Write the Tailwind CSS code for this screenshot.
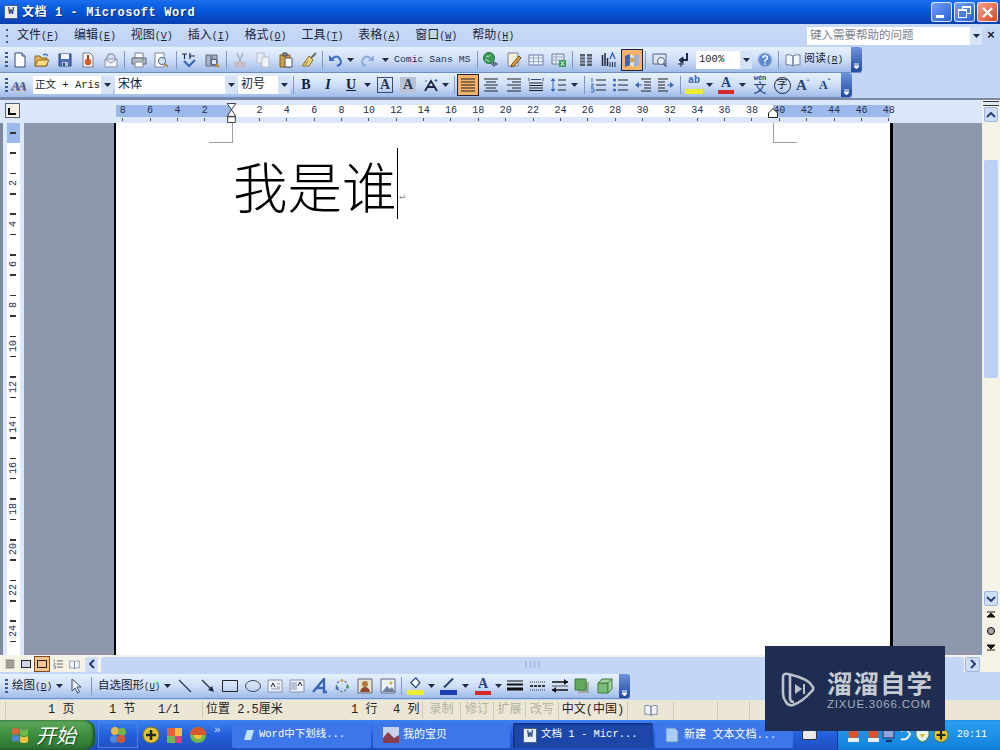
<!DOCTYPE html>
<html lang="zh-CN">
<head>
  <meta charset="UTF-8" />
  <title>文档 1 - Microsoft Word</title>
  <script src="https://cdn.jsdelivr.net/npm/@tailwindcss/browser@4"></script>
</head>
<body class="bg-[#c3d6f5]">
  <!-- iconos compartidos -->
  <svg class="hidden" xmlns="http://www.w3.org/2000/svg">
    <symbol id="new" viewBox="0 0 16 16"><path d="M3 1h7l3 3v11H3z" fill="#fff" stroke="#34466e"/><path d="M10 1v3h3" fill="#d8e4f8" stroke="#34466e"/></symbol>
    <symbol id="open" viewBox="0 0 16 16"><path d="M1 4h5l1 2h6v8H1z" fill="#e8b84e" stroke="#8a6420"/><path d="M1 14l3-6h11l-3 6z" fill="#fbdc84" stroke="#8a6420"/><path d="M9 3q3-2 5 1" fill="none" stroke="#3a70c0" stroke-width="1.3"/></symbol>
    <symbol id="save" viewBox="0 0 16 16"><path d="M2 2h12v12H2z" fill="#4d6fb5" stroke="#27407a"/><path d="M4 2h8v5H4z" fill="#f3f6fc"/><path d="M5 10h6v4H5z" fill="#b8c4dc"/><path d="M6 11h2v3H6z" fill="#34466e"/></symbol>
    <symbol id="perm" viewBox="0 0 16 16"><path d="M3 1h7l3 3v11H3z" fill="#f6f3ee" stroke="#7a7f90"/><circle cx="8" cy="10" r="3.2" fill="#d9552a"/><path d="M7 3h2v5H7z" fill="#b23a1a"/></symbol>
    <symbol id="mail" viewBox="0 0 16 16"><path d="M2 7h12v8H2z" fill="#eef1f6" stroke="#8d94a6"/><path d="M4 7q0-5 4-5t4 5" fill="none" stroke="#9aa0b0" stroke-width="1.5"/><path d="M2 7l6 4 6-4" fill="none" stroke="#8d94a6"/></symbol>
    <symbol id="print" viewBox="0 0 16 16"><path d="M4 1h8v5H4z" fill="#fff" stroke="#7a8296"/><path d="M1 6h14v6H1z" fill="#b7bfcc" stroke="#5e6678"/><path d="M4 10h8v5H4z" fill="#fff" stroke="#7a8296"/><path d="M11 8h2" stroke="#3ca040"/></symbol>
    <symbol id="preview" viewBox="0 0 16 16"><path d="M2 1h9v14H2z" fill="#fff" stroke="#7a8296"/><circle cx="9" cy="9" r="3.6" fill="#cfe2f6" stroke="#5e6678"/><path d="M12 12l3 3" stroke="#b88a30" stroke-width="2"/></symbol>
    <symbol id="spell" viewBox="0 0 16 16"><path d="M1 2h5M3.500 2v5M9 1v6M8 4h6" stroke="#1c2a50" stroke-width="1.2"/><path d="M3 9l5 5 6-6" fill="none" stroke="#3b64b8" stroke-width="2.2"/></symbol>
    <symbol id="research" viewBox="0 0 16 16"><path d="M2 3h5v11H2zM8 3h5v11H8z" fill="#a9b3c8" stroke="#5e6678"/><circle cx="10" cy="10" r="3" fill="#dbe6f5" stroke="#39466a"/><path d="M12 12l3 3" stroke="#b88a30" stroke-width="2"/></symbol>
    <symbol id="cut" viewBox="0 0 16 16"><path d="M5 1l4 9M11 1L7 10" stroke="#a3adc2" stroke-width="1.3"/><circle cx="5" cy="12.500" r="2" fill="none" stroke="#d1aaa5" stroke-width="1.3"/><circle cx="11" cy="12.500" r="2" fill="none" stroke="#d1aaa5" stroke-width="1.3"/></symbol>
    <symbol id="copy" viewBox="0 0 16 16"><path d="M2 1h7v10H2z" fill="#e8edf6" stroke="#b4bccd"/><path d="M7 5h7v10H7z" fill="#f2f5fb" stroke="#b4bccd"/></symbol>
    <symbol id="paste" viewBox="0 0 16 16"><path d="M2 3h10v12H2z" fill="#cf9f4a" stroke="#7b5a1e"/><path d="M5 1h4v3H5z" fill="#8c94a6" stroke="#444"/><path d="M7 6h7v9H7z" fill="#fff" stroke="#4b5470"/></symbol>
    <symbol id="brush" viewBox="0 0 16 16"><path d="M10 6l5-5" stroke="#6d6a5d" stroke-width="2"/><path d="M8 4l4 4-4 6-7 0z" fill="#ecd079" stroke="#8a7130"/><path d="M4 13l3-4" stroke="#8a7130"/></symbol>
    <symbol id="undo" viewBox="0 0 16 16"><path d="M4 7q5-5 8 0t-3 7" fill="none" stroke="#3f6dc2" stroke-width="2.2"/><path d="M1 3v6h6z" fill="#3f6dc2"/></symbol>
    <symbol id="redo" viewBox="0 0 16 16"><path d="M12 7q-5-5-8 0t3 7" fill="none" stroke="#8ea9dc" stroke-width="2.2"/><path d="M15 3v6H9z" fill="#8ea9dc"/></symbol>
    <symbol id="link" viewBox="0 0 16 16"><circle cx="7" cy="6" r="5.500" fill="#3f9d5b" stroke="#2a6d41"/><path d="M4 4q3 2 4-1M3 8q3-1 4 2" fill="none" stroke="#b8e6c0"/><path d="M9 12h3M11 10l4 2-4 2" fill="none" stroke="#55607a" stroke-width="1.4"/></symbol>
    <symbol id="tb" viewBox="0 0 16 16"><path d="M2 1h10v13H2z" fill="#f6f1d8" stroke="#7a8296"/><path d="M6 12l7-8 2 2-7 8-3 1z" fill="#e0a040" stroke="#6c4a1a"/></symbol>
    <symbol id="table" viewBox="0 0 16 16"><path d="M1 3h14v10H1z" fill="#eef3fb" stroke="#6f7d9c"/><path d="M1 6h14M1 9.500h14M5.500 3v10M10.500 3v10" stroke="#9aa8c6"/></symbol>
    <symbol id="excel" viewBox="0 0 16 16"><path d="M1 2h12v10H1z" fill="#e6edf6" stroke="#6f7d9c"/><path d="M1 5h12M1 8h12M5 2v10" stroke="#9aa8c6"/><path d="M8 8h7v7H8z" fill="#3f9d5b"/><path d="M10 9.500l3 4M13 9.500l-3 4" stroke="#fff"/></symbol>
    <symbol id="cols" viewBox="0 0 16 16"><path d="M2 2h5v12H2zM9 2h5v12H9z" fill="#545c6e"/><path d="M2 5h5M2 8h5M2 11h5M9 5h5M9 8h5M9 11h5" stroke="#cdd5e4"/></symbol>
    <symbol id="draw" viewBox="0 0 16 16"><path d="M1.500 3v11M4 1v13M6.500 6v8" stroke="#20283e" stroke-width="1.5"/><path d="M9 7l2.500-6 2.500 6" fill="none" stroke="#3b64b8" stroke-width="1.4"/><path d="M9 10v5M11.500 10v5M14 10v5" stroke="#20283e"/></symbol>
    <symbol id="map" viewBox="0 0 16 16"><path d="M1 4l5-2v11l-5 2z" fill="#3b64b8"/><path d="M6 2l4 2v11l-4-2z" fill="#e6e3d6"/><path d="M10 4l5-2v11l-5 2z" fill="#9ab0d8"/><circle cx="8" cy="8" r="2.500" fill="#e0a040"/></symbol>
    <symbol id="thumb" viewBox="0 0 16 16"><path d="M1 2h13v10H1z" fill="#dbe6f5" stroke="#566282"/><circle cx="9" cy="9" r="3.500" fill="#f3f6fc" stroke="#566282"/><path d="M11.500 11.500l3 3" stroke="#566282" stroke-width="2"/></symbol>
    <symbol id="pil" viewBox="0 0 16 16"><path d="M12 1v7H6" fill="none" stroke="#1c2a50" stroke-width="2"/><path d="M8 5L4 8l4 3zM6 9v6M3 12h6" fill="#1c2a50" stroke="#1c2a50"/></symbol>
    <symbol id="help" viewBox="0 0 16 16"><circle cx="8" cy="8" r="7" fill="#5e88cf" stroke="#a8bde4" stroke-width="1.4"/><path d="M5.800 6q.4-2.200 2.400-2.200t2.200 2q0 1.200-1.400 1.900T8 10M8 11.200v1.600" fill="none" stroke="#fff" stroke-width="1.500"/></symbol>
    <symbol id="book" viewBox="0 0 16 16"><path d="M1 3q4-1 7 1v10q-3-2-7-1zM15 3q-4-1-7 1v10q3-2 7-1z" fill="#f2f5fb" stroke="#6f7d9c"/></symbol>
    <symbol id="left" viewBox="0 0 16 16"><path d="M1 2h14M1 5h14M1 8h14M1 11h14M1 14h14" stroke="#222" stroke-width="1.200"/></symbol>
    <symbol id="center" viewBox="0 0 16 16"><path d="M1 2h14M3 5h10M1 8h14M3 11h10M1 14h14" stroke="#222"/></symbol>
    <symbol id="right" viewBox="0 0 16 16"><path d="M1 2h14M6 5h9M1 8h14M6 11h9M1 14h14" stroke="#222"/></symbol>
    <symbol id="just" viewBox="0 0 16 16"><path d="M1 1v3M15 1v3M3 2.500h10" stroke="#3b4a70"/><path d="M1 6h14M1 8.500h14M1 11h14M1 13.500h14" stroke="#222"/></symbol>
    <symbol id="spacing" viewBox="0 0 16 16"><path d="M3 1l2.500 3h-5zM3 15L.5 12h5z" fill="#3b64b8"/><path d="M3 3v10" stroke="#3b64b8"/><path d="M8 3h8M8 8h8M8 13h8" stroke="#222"/></symbol>
    <symbol id="num" viewBox="0 0 16 16"><path d="M2 1v4M1 7h2.500L1 10h3M1 12h3v3H1" fill="none" stroke="#3b64b8"/><path d="M6 3h10M6 8h10M6 13h10" stroke="#222"/></symbol>
    <symbol id="bul" viewBox="0 0 16 16"><circle cx="2.500" cy="3" r="1.500" fill="#3b64b8"/><circle cx="2.500" cy="8" r="1.500" fill="#3b64b8"/><circle cx="2.500" cy="13" r="1.500" fill="#3b64b8"/><path d="M6 3h10M6 8h10M6 13h10" stroke="#222"/></symbol>
    <symbol id="out" viewBox="0 0 16 16"><path d="M6 2h10M9 5h7M9 8h7M9 11h7M6 14h10" stroke="#222"/><path d="M0 8l4-3v6z" fill="#3b64b8"/><path d="M4 8h3" stroke="#3b64b8"/></symbol>
    <symbol id="ind" viewBox="0 0 16 16"><path d="M0 2h10M0 5h7M0 8h7M0 11h7M0 14h10" stroke="#222"/><path d="M16 8l-4-3v6z" fill="#3b64b8"/><path d="M12 8H9" stroke="#3b64b8"/></symbol>
    <symbol id="line" viewBox="0 0 16 16"><path d="M2 2l12 12" stroke="#2c3650" stroke-width="1.200"/></symbol>
    <symbol id="arrow" viewBox="0 0 16 16"><path d="M2 2l10 10" stroke="#2c3650" stroke-width="1.400"/><path d="M14 14l-6-2 4-4z" fill="#1c2a50"/></symbol>
    <symbol id="rect" viewBox="0 0 16 16"><path d="M.5 2.500h15v11H.5z" fill="none" stroke="#222"/></symbol>
    <symbol id="oval" viewBox="0 0 16 16"><ellipse cx="8" cy="8" rx="7.500" ry="5.500" fill="none" stroke="#3a4a6a"/></symbol>
    <symbol id="txt" viewBox="0 0 16 16"><path d="M1 2h14v12H1z" fill="#eef3fb" stroke="#8692ac"/><path d="M4 9l2-4 2 4" fill="none" stroke="#222"/><path d="M10 6h3M10 9h3M4 11h9" stroke="#8692ac"/></symbol>
    <symbol id="vtxt" viewBox="0 0 16 16"><path d="M1 2h14v12H1z" fill="#eef3fb" stroke="#8692ac"/><path d="M3 4v8M5 4v8M7 4v8" stroke="#8692ac"/><path d="M9 8l2-4 2 4" fill="none" stroke="#222"/></symbol>
    <symbol id="wa" viewBox="0 0 16 16"><path d="M1 14L12 1v13h3M5 10h7" fill="none" stroke="#3b64b8" stroke-width="2.400"/></symbol>
    <symbol id="dg" viewBox="0 0 16 16"><circle cx="8" cy="8" r="5.500" fill="none" stroke="#6b738a" stroke-dasharray="2 2" stroke-width="1.500"/><circle cx="8" cy="2.500" r="1.500" fill="#e0a040"/><circle cx="13.500" cy="9" r="1.500" fill="#3f9d5b"/><circle cx="3" cy="10" r="1.500" fill="#3b64b8"/></symbol>
    <symbol id="clip" viewBox="0 0 16 16"><path d="M1 1h14v14H1z" fill="#e9e4d2" stroke="#5e6678"/><circle cx="8" cy="6" r="3" fill="#b57a3a"/><path d="M3 14q1-5 5-5t5 5z" fill="#8e4a30"/></symbol>
    <symbol id="pic" viewBox="0 0 16 16"><path d="M1 1h14v14H1z" fill="#eef3fb" stroke="#5e6678"/><path d="M2 14l5-6 3 3 2-2 3 5z" fill="#6e7fa0"/><circle cx="11" cy="5" r="1.500" fill="#e0a040"/></symbol>
    <symbol id="ls" viewBox="0 0 16 16"><path d="M0 3h16" stroke="#111"/><path d="M0 6.500h16" stroke="#111" stroke-width="2"/><path d="M0 11h16" stroke="#111" stroke-width="3"/></symbol>
    <symbol id="dash" viewBox="0 0 16 16"><path d="M0 4h16M0 12h16" stroke="#333" stroke-dasharray="1 1"/><path d="M0 8h16" stroke="#333" stroke-dasharray="3 1" stroke-width="2"/></symbol>
    <symbol id="arrs" viewBox="0 0 16 16"><path d="M0 4h16M0 12h16" stroke="#111" stroke-width="1.300"/><path d="M12 1l4 3-4 3zM4 9l-4 3 4 3z" fill="#111"/><path d="M0 8h16" stroke="#555"/></symbol>
    <symbol id="sh" viewBox="0 0 16 16"><path d="M4 4h11v11H4z" fill="#9aa8a0"/><path d="M1 1h11v11H1z" fill="#62a85e" stroke="#3f7a3e"/></symbol>
    <symbol id="d3" viewBox="0 0 16 16"><path d="M1 5h10v10H1z" fill="#7cbb78" stroke="#3f7a3e"/><path d="M1 5l4-4h10l-4 4zM11 5l4-4v10l-4 4z" fill="#a5d39d" stroke="#3f7a3e"/></symbol>
    <symbol id="cursor" viewBox="0 0 16 16"><path d="M4 1v12l3-3 2.500 5 2-1-2.500-5h4z" fill="#eef3fb" stroke="#3b4a70"/></symbol>
    <symbol id="down" viewBox="0 0 7 4"><path d="M0 0h7L3.500 4z" fill="#1c2a50"/></symbol>
    <symbol id="end" viewBox="0 0 11 24"><path d="M3 17h5M3 19h5l-2.500 3z" fill="#fff" stroke="#fff"/></symbol>
  </svg>

  <div class="relative flex h-[750px] w-[1000px] flex-col overflow-hidden text-[12px] text-[#141c30] [font-family:'Liberation_Mono','Noto_Sans_CJK_SC',monospace]">

    <!-- barra de titulo -->
    <div class="flex h-[24px] shrink-0 items-center bg-gradient-to-b from-[#1b6ff0] via-[#0254d8] to-[#0a3fb0] pl-[4px] pr-[2px] text-white">
      <div class="mr-[4px] flex h-[14px] w-[14px] items-center justify-center border border-[#54607c] bg-[#e8eef8] text-[10px] font-bold leading-none text-[#27407a]">W</div>
      <span class="pt-[1px] text-[12px] font-bold tracking-[0.6px] [text-shadow:1px_1px_0_#0a2c80]">文档 1 - Microsoft Word</span>
      <div class="ml-auto flex gap-[2px]">
        <div class="flex h-[20px] w-[21px] items-end justify-start rounded-[3px] border border-white/80 bg-gradient-to-br from-[#74a0f2] to-[#2a5fd8] pb-[3px] pl-[4px]"><div class="h-[3px] w-[8px] bg-white"></div></div>
        <div class="relative h-[20px] w-[21px] rounded-[3px] border border-white/80 bg-gradient-to-br from-[#74a0f2] to-[#2a5fd8]">
          <div class="absolute left-[7px] top-[3px] h-[8px] w-[9px] border border-t-2 border-white"></div>
          <div class="absolute left-[3px] top-[6px] h-[9px] w-[9px] border border-t-2 border-white bg-[#4a7ce4]"></div>
        </div>
        <div class="flex h-[20px] w-[21px] items-center justify-center rounded-[3px] border border-white/80 bg-gradient-to-br from-[#f0a088] to-[#d8431c]">
          <svg class="h-[13px] w-[13px]" viewBox="0 0 13 13"><path d="M2 2l9 9M11 2l-9 9" stroke="#fff" stroke-width="2.400"/></svg>
        </div>
      </div>
    </div>

    <!-- menu -->
    <div class="flex h-[23px] shrink-0 items-center bg-gradient-to-b from-[#c9daf6] to-[#bfd3f4]">
      <div class="ml-[6px] mr-[9px] flex h-[14px] w-[2px] shrink-0 flex-col justify-between"><i class="h-[2px] bg-[#3e5a92]"></i><i class="h-[2px] bg-[#3e5a92]"></i><i class="h-[2px] bg-[#3e5a92]"></i></div>
      <div class="flex text-[12px] leading-none text-[#1c2440]">
        <span class="w-[56.900px] whitespace-nowrap">文件<span class="text-[10px]">(<u>F</u>)</span></span>
        <span class="w-[56.900px] whitespace-nowrap">编辑<span class="text-[10px]">(<u>E</u>)</span></span>
        <span class="w-[56.900px] whitespace-nowrap">视图<span class="text-[10px]">(<u>V</u>)</span></span>
        <span class="w-[56.900px] whitespace-nowrap">插入<span class="text-[10px]">(<u>I</u>)</span></span>
        <span class="w-[56.900px] whitespace-nowrap">格式<span class="text-[10px]">(<u>O</u>)</span></span>
        <span class="w-[56.900px] whitespace-nowrap">工具<span class="text-[10px]">(<u>T</u>)</span></span>
        <span class="w-[56.900px] whitespace-nowrap">表格<span class="text-[10px]">(<u>A</u>)</span></span>
        <span class="w-[56.900px] whitespace-nowrap">窗口<span class="text-[10px]">(<u>W</u>)</span></span>
        <span class="w-[56.900px] whitespace-nowrap">帮助<span class="text-[10px]">(<u>H</u>)</span></span>
      </div>
      <div class="ml-auto mr-[2px] flex items-center">
        <div class="flex h-[18px] w-[175px] items-center bg-white pl-[3px] text-[11.500px] text-[#7b8190]">
          <span>键入需要帮助的问题</span>
          <div class="ml-auto flex h-full w-[12px] items-center justify-center bg-[#d6e2f6]"><svg class="h-[4px] w-[7px]"><use href="#down"/></svg></div>
        </div>
        <span class="ml-[2px] w-[14px] text-center text-[13px] font-bold leading-none">×</span>
      </div>
    </div>

    <!-- barra estandar -->
    <div class="flex h-[26px] shrink-0">
      <div class="flex h-[25px] w-[862px] items-center rounded-r-[3px] bg-gradient-to-b from-[#e6f0fe] via-[#cfdff8] to-[#9fbbe8] pl-[5px] shadow-[0_1px_0_#6f8cc4]">
        <div class="flex h-[15px] w-[3px] shrink-0 flex-col justify-between"><i class="h-[2px] bg-[#3e5a92]"></i><i class="h-[2px] bg-[#3e5a92]"></i><i class="h-[2px] bg-[#3e5a92]"></i><i class="h-[2px] bg-[#3e5a92]"></i></div>
        <svg class="ml-[4px] h-[16px] w-[16px] shrink-0"><use href="#new"/></svg>
        <svg class="ml-[6px] h-[16px] w-[16px] shrink-0"><use href="#open"/></svg>
        <svg class="ml-[7px] h-[16px] w-[16px] shrink-0"><use href="#save"/></svg>
        <svg class="ml-[7px] h-[16px] w-[16px] shrink-0"><use href="#perm"/></svg>
        <svg class="ml-[7px] h-[16px] w-[16px] shrink-0"><use href="#mail"/></svg>
        <div class="ml-[5px] h-[18px] w-[1px] shrink-0 bg-[#7f98c8]"></div>
        <svg class="ml-[6px] h-[16px] w-[16px] shrink-0"><use href="#print"/></svg>
        <svg class="ml-[6px] h-[16px] w-[16px] shrink-0"><use href="#preview"/></svg>
        <div class="ml-[7px] h-[18px] w-[1px] shrink-0 bg-[#7f98c8]"></div>
        <svg class="ml-[4px] h-[16px] w-[16px] shrink-0"><use href="#spell"/></svg>
        <svg class="ml-[7px] h-[16px] w-[16px] shrink-0"><use href="#research"/></svg>
        <div class="ml-[6px] h-[18px] w-[1px] shrink-0 bg-[#7f98c8]"></div>
        <svg class="ml-[5px] h-[16px] w-[16px] shrink-0"><use href="#cut"/></svg>
        <svg class="ml-[7px] h-[16px] w-[16px] shrink-0"><use href="#copy"/></svg>
        <svg class="ml-[7px] h-[16px] w-[16px] shrink-0"><use href="#paste"/></svg>
        <svg class="ml-[7px] h-[16px] w-[16px] shrink-0"><use href="#brush"/></svg>
        <div class="ml-[5px] h-[18px] w-[1px] shrink-0 bg-[#7f98c8]"></div>
        <svg class="ml-[5px] h-[16px] w-[16px] shrink-0"><use href="#undo"/></svg>
        <svg class="ml-[2.500px] h-[4px] w-[7px] shrink-0"><use href="#down"/></svg>
        <svg class="ml-[5.500px] h-[16px] w-[16px] shrink-0"><use href="#redo"/></svg>
        <svg class="ml-[6.500px] h-[4px] w-[7px] shrink-0"><use href="#down"/></svg>
        <span class="ml-[5.500px] w-[76px] shrink-0 whitespace-nowrap text-[9.800px] leading-none text-[#25304c]">Comic Sans MS</span>
        <div class="ml-[7px] h-[18px] w-[1px] shrink-0 bg-[#7f98c8]"></div>
        <svg class="ml-[4px] h-[16px] w-[16px] shrink-0"><use href="#link"/></svg>
        <svg class="ml-[8px] h-[16px] w-[16px] shrink-0"><use href="#tb"/></svg>
        <svg class="ml-[6px] h-[16px] w-[16px] shrink-0"><use href="#table"/></svg>
        <svg class="ml-[7px] h-[16px] w-[16px] shrink-0"><use href="#excel"/></svg>
        <div class="ml-[5px] h-[18px] w-[1px] shrink-0 bg-[#7f98c8]"></div>
        <svg class="ml-[5px] h-[16px] w-[16px] shrink-0"><use href="#cols"/></svg>
        <svg class="ml-[7px] h-[16px] w-[16px] shrink-0"><use href="#draw"/></svg>
        <div class="ml-[4px] flex h-[22px] w-[22px] shrink-0 items-center justify-center border border-[#1c2440] bg-[#f5b26b]"><svg class="h-[16px] w-[16px]"><use href="#map"/></svg></div>
        <div class="ml-[2px] h-[18px] w-[1px] shrink-0 bg-[#7f98c8]"></div>
        <svg class="ml-[6px] h-[16px] w-[16px] shrink-0"><use href="#thumb"/></svg>
        <svg class="ml-[7px] h-[16px] w-[16px] shrink-0"><use href="#pil"/></svg>
        <div class="ml-[5px] flex h-[18px] w-[56px] shrink-0 items-center bg-white pl-[3px] text-[10.500px] leading-none">100%<div class="ml-auto flex h-full w-[12px] items-center justify-center bg-[#d6e2f6]"><svg class="h-[4px] w-[7px]"><use href="#down"/></svg></div></div>
        <svg class="ml-[5px] h-[16px] w-[16px] shrink-0"><use href="#help"/></svg>
        <div class="ml-[5px] h-[18px] w-[1px] shrink-0 bg-[#7f98c8]"></div>
        <svg class="ml-[6px] h-[16px] w-[16px] shrink-0"><use href="#book"/></svg>
        <span class="ml-[3px] whitespace-nowrap text-[11px] leading-none">阅读<span class="text-[9.500px]">(<u>R</u>)</span></span>
        <div class="ml-auto h-full w-[11px] shrink-0 rounded-r-[3px] bg-gradient-to-b from-[#6d93dc] to-[#234a9e]"><svg class="h-[24px] w-[11px]"><use href="#end"/></svg></div>
      </div>
    </div>

    <!-- barra formato -->
    <div class="flex h-[25px] shrink-0">
      <div class="flex h-[24px] w-[852px] items-center rounded-r-[3px] bg-gradient-to-b from-[#e6f0fe] via-[#cfdff8] to-[#9fbbe8] pl-[5px] shadow-[0_1px_0_#6f8cc4]">
        <div class="flex h-[15px] w-[3px] shrink-0 flex-col justify-between"><i class="h-[2px] bg-[#3e5a92]"></i><i class="h-[2px] bg-[#3e5a92]"></i><i class="h-[2px] bg-[#3e5a92]"></i><i class="h-[2px] bg-[#3e5a92]"></i></div>
        <span class="ml-[3px] flex w-[20px] shrink-0 text-[13px] font-bold italic leading-none text-[#3b64b8] [font-family:'Liberation_Serif',serif] [text-shadow:1px_1px_0_#d0733a]"><span>A</span><span class="-ml-[2px]">A</span></span>
        <div class="ml-[2px] flex h-[18px] w-[80px] shrink-0 items-center bg-white pl-[2px] text-[10.500px] leading-none"><span class="w-[66px] whitespace-nowrap">正文 + Aris</span><div class="ml-auto flex h-full w-[12px] items-center justify-center bg-[#d6e2f6]"><svg class="h-[4px] w-[7px]"><use href="#down"/></svg></div></div>
        <div class="ml-[2px] flex h-[18px] w-[122px] shrink-0 items-center bg-white pl-[3px] text-[12px] leading-none">宋体<div class="ml-auto flex h-full w-[12px] items-center justify-center bg-[#d6e2f6]"><svg class="h-[4px] w-[7px]"><use href="#down"/></svg></div></div>
        <div class="ml-[1px] flex h-[18px] w-[52px] shrink-0 items-center bg-white pl-[3px] text-[12px] leading-none">初号<div class="ml-auto flex h-full w-[12px] items-center justify-center bg-[#d6e2f6]"><svg class="h-[4px] w-[7px]"><use href="#down"/></svg></div></div>
        <div class="ml-[3px] h-[18px] w-[1px] shrink-0 bg-[#7f98c8]"></div>
        <span class="ml-[4px] w-[16px] shrink-0 text-center text-[14px] font-bold leading-none [font-family:'Liberation_Serif',serif]">B</span>
        <span class="ml-[6px] w-[16px] shrink-0 text-center text-[14px] font-bold italic leading-none [font-family:'Liberation_Serif',serif]">I</span>
        <span class="ml-[7px] w-[16px] shrink-0 text-center text-[14px] font-bold leading-none underline [font-family:'Liberation_Serif',serif]">U</span>
        <svg class="ml-[4.500px] h-[4px] w-[7px] shrink-0"><use href="#down"/></svg>
        <span class="ml-[6.500px] flex h-[16px] w-[16px] shrink-0 items-center justify-center border border-[#3b4a70] text-[14px] font-bold leading-none text-[#2c3a60] [font-family:'Liberation_Serif',serif]">A</span>
        <span class="ml-[7px] flex h-[16px] w-[16px] shrink-0 items-center justify-center bg-[#b9c3d4] text-[14px] font-bold leading-none text-[#2c3a60] [font-family:'Liberation_Serif',serif]">A</span>
        <svg class="ml-[7px] h-[16px] w-[16px] shrink-0" viewBox="0 0 16 16"><path d="M2 14L8 4l6 10M4 10h8" fill="none" stroke="#1c2440" stroke-width="1.800"/><path d="M2 4h2M13 2v3M11.500 3.500h3" stroke="#3b64b8" stroke-width="1.200"/></svg>
        <svg class="ml-[2.500px] h-[4px] w-[7px] shrink-0"><use href="#down"/></svg>
        <div class="ml-[5.500px] h-[18px] w-[1px] shrink-0 bg-[#7f98c8]"></div>
        <div class="ml-[2px] flex h-[22px] w-[22px] shrink-0 items-center justify-center border border-[#1c2440] bg-[#f5b26b]"><svg class="h-[16px] w-[16px]"><use href="#left"/></svg></div>
        <svg class="ml-[4px] h-[16px] w-[16px] shrink-0"><use href="#center"/></svg>
        <svg class="ml-[7px] h-[16px] w-[16px] shrink-0"><use href="#right"/></svg>
        <svg class="ml-[6px] h-[16px] w-[16px] shrink-0"><use href="#just"/></svg>
        <svg class="ml-[6px] h-[16px] w-[16px] shrink-0"><use href="#spacing"/></svg>
        <svg class="ml-[4.500px] h-[4px] w-[7px] shrink-0"><use href="#down"/></svg>
        <div class="ml-[6.500px] h-[18px] w-[1px] shrink-0 bg-[#7f98c8]"></div>
        <svg class="ml-[5px] h-[16px] w-[16px] shrink-0"><use href="#num"/></svg>
        <svg class="ml-[6px] h-[16px] w-[16px] shrink-0"><use href="#bul"/></svg>
        <svg class="ml-[7px] h-[16px] w-[16px] shrink-0"><use href="#out"/></svg>
        <svg class="ml-[7px] h-[16px] w-[16px] shrink-0"><use href="#ind"/></svg>
        <div class="ml-[6px] h-[18px] w-[1px] shrink-0 bg-[#7f98c8]"></div>
        <div class="ml-[4px] flex h-[18px] w-[18px] shrink-0 flex-col items-center leading-none"><span class="text-[10px] font-bold text-[#3b64b8]">ab</span><div class="mt-auto h-[5px] w-[18px] bg-[#ecec30]"></div></div>
        <svg class="ml-[2.500px] h-[4px] w-[7px] shrink-0"><use href="#down"/></svg>
        <div class="ml-[4.500px] flex h-[18px] w-[18px] shrink-0 flex-col items-center leading-none"><span class="text-[14px] font-bold text-[#27407a] [font-family:'Liberation_Serif',serif]">A</span><div class="mt-auto h-[4px] w-[16px] bg-[#d42a2a]"></div></div>
        <svg class="ml-[3.500px] h-[4px] w-[7px] shrink-0"><use href="#down"/></svg>
        <div class="ml-[3.500px] flex w-[22px] shrink-0 flex-col items-center leading-none text-[#27407a]"><span class="text-[7px] font-bold">wén</span><span class="text-[13px]">文</span></div>
        <div class="ml-[2.500px] flex h-[17px] w-[17px] shrink-0 items-center justify-center rounded-full border border-[#1c2440] text-[11px] leading-none">字</div>
        <span class="ml-[5.500px] w-[16px] shrink-0 whitespace-nowrap text-[15px] font-bold leading-none text-[#27407a] [font-family:'Liberation_Serif',serif]">A<sup class="text-[8px]">ˆ</sup></span>
        <span class="ml-[7px] w-[16px] shrink-0 whitespace-nowrap text-[12px] font-bold leading-none text-[#27407a] [font-family:'Liberation_Serif',serif]">A<sup class="text-[8px]">ˇ</sup></span>
        <div class="ml-auto h-full w-[11px] shrink-0 rounded-r-[3px] bg-gradient-to-b from-[#6d93dc] to-[#234a9e]"><svg class="h-[24px] w-[11px]"><use href="#end"/></svg></div>
      </div>
    </div>

    <!-- regla horizontal -->
    <div class="flex h-[25px] shrink-0 border-t-2 border-[#7d8a9e] bg-[#dbe7fb]">
      <div class="ml-[5px] mt-[3px] flex h-[15px] w-[15px] items-end border border-[#55607a] bg-[#f3f1e6] p-[2px]"><svg class="h-[7px] w-[8px]" viewBox="0 0 8 7"><path d="M1 0v6h7" fill="none" stroke="#111" stroke-width="2"/></svg></div>
      <div class="relative ml-[96px] w-[774px]">
        <div class="mt-[5px] flex h-[12px]">
          <div class="h-full w-[116px] bg-[#9db8ea]"></div>
          <div class="h-full w-[541px] bg-white"></div>
          <div class="h-full w-[117px] bg-[#9db8ea]"></div>
        </div>
        <div id="rule-h" class="absolute left-[-7px] top-[5px] flex h-[18px]"></div>
        <!-- sangrias -->
        <svg class="absolute left-[110px] top-[3px] h-[20px] w-[11px]" viewBox="0 0 11 21"><path d="M1 .5h9L5.500 7zM5.500 7L10 14H1z" fill="#fff" stroke="#333"/><path d="M1.500 14.500h8v6h-8z" fill="#fff" stroke="#333"/></svg>
        <svg class="absolute left-[652px] top-[8px] h-[10px] w-[10px]" viewBox="0 0 10 10"><path d="M5 .5L9.500 5v4.500h-9V5z" fill="#fff" stroke="#222"/></svg>
      </div>
    </div>

    <!-- documento -->
    <div class="flex min-h-0 flex-1">
      <div class="w-[24px] shrink-0 border-l-[3px] border-[#7d8a9e] bg-[#dbe7fb] pl-[4px]">
        <div id="rule-v" class="relative h-full w-[13px] bg-white">
          <div class="h-[20px] bg-[#9db8ea]"></div>
        </div>
      </div>
      <div class="w-[90px] shrink-0 bg-[#8d97ad]"></div>
      <div class="relative w-[779px] shrink-0 border-x-2 border-r-[3px] border-black bg-white">
        <div class="absolute left-[93px] top-0 h-[20px] w-[24px] border-b border-r border-[#a0a0a0]"></div>
        <div class="absolute left-[657px] top-0 h-[20px] w-[24px] border-b border-l border-[#a0a0a0]"></div>
        <div class="ml-[117px] mt-[33px] flex items-start">
          <span class="whitespace-nowrap text-[54.500px] font-light leading-[58px] text-black [font-family:'Noto_Sans_CJK_SC',sans-serif]">我是谁</span>
          <div class="-mt-[8px] h-[71px] w-[1.500px] shrink-0 bg-black"></div>
          <span class="ml-[1px] mt-[36px] text-[10px] leading-none text-[#8a8a8a]">↵</span>
        </div>
      </div>
      <div class="w-[89px] shrink-0 bg-[#8d97ad]"></div>
      <!-- scroll vertical -->
      <div class="-mt-[23px] flex w-[18px] shrink-0 flex-col items-center bg-[#f5f2e6]">
        <div class="mt-[1px] h-[5px] w-[16px] shrink-0 border-y border-[#333] bg-[#dfe6f4]"></div>
        <div class="mt-[1px] flex h-[15px] w-[14px] shrink-0 items-center justify-center rounded-[2px] border border-[#9db4e0] bg-[#cfdef8]"><svg class="h-[6px] w-[10px]" viewBox="0 0 10 6"><path d="M1 5l4-4 4 4" fill="none" stroke="#27407a" stroke-width="2"/></svg></div>
        <div class="mt-[38px] h-[218px] w-[14px] shrink-0 rounded-[2px] bg-[#bcd0f5]"></div>
        <div class="mt-[213px] flex h-[15px] w-[14px] shrink-0 items-center justify-center rounded-[2px] border border-[#9db4e0] bg-[#cfdef8]"><svg class="h-[6px] w-[10px]" viewBox="0 0 10 6"><path d="M1 1l4 4 4-4" fill="none" stroke="#27407a" stroke-width="2"/></svg></div>
        <svg class="mt-[5px] h-[8px] w-[8px] shrink-0" viewBox="0 0 8 8"><path d="M0 1h8M4 2L0 6h8z" stroke="#111" fill="#111"/></svg>
        <div class="mt-[8px] h-[8px] w-[8px] shrink-0 rounded-full border border-black bg-[#a8a8a8]"></div>
        <svg class="mt-[8px] h-[8px] w-[8px] shrink-0" viewBox="0 0 8 8"><path d="M0 7h8M4 6L0 2h8z" stroke="#111" fill="#111"/></svg>
      </div>
    </div>

    <!-- scroll horizontal -->
    <div class="flex h-[17px] shrink-0 items-center border-t border-[#f5f2e6] bg-[#f5f2e6] pr-[20px]">
      <svg class="ml-[5px] h-[10px] w-[10px] shrink-0"><use href="#left"/></svg>
      <div class="ml-[6px] h-[8px] w-[10px] shrink-0 border border-[#222] bg-[#cfd8e8]"></div>
      <div class="ml-[3px] flex h-[16px] w-[16px] shrink-0 items-center justify-center border border-[#7a4a20] bg-[#f5c48c]"><div class="h-[8px] w-[10px] border border-[#222]"></div></div>
      <svg class="ml-[3px] h-[10px] w-[10px] shrink-0"><use href="#num"/></svg>
      <svg class="ml-[6px] h-[11px] w-[11px] shrink-0"><use href="#book"/></svg>
      <div class="ml-[5px] flex h-[15px] w-[13px] shrink-0 items-center justify-center rounded-[2px] bg-[#cfdef8]"><svg class="h-[10px] w-[6px]" viewBox="0 0 6 10"><path d="M5 1L1 5l4 4" fill="none" stroke="#27407a" stroke-width="2"/></svg></div>
      <div class="ml-[3px] flex h-[15px] flex-1 items-center justify-center rounded-[2px] bg-[#c3d6f8]"><span class="text-[7px] leading-none text-[#7e90b8]">||||</span></div>
      <div class="ml-[1px] flex h-[15px] w-[15px] shrink-0 items-center justify-center rounded-[2px] border border-[#9db4e0] bg-[#cfdef8]"><svg class="h-[10px] w-[6px]" viewBox="0 0 6 10"><path d="M1 1l4 4-4 4" fill="none" stroke="#27407a" stroke-width="2"/></svg></div>
    </div>

    <!-- barra dibujo -->
    <div class="flex h-[28px] shrink-0 items-center bg-[#c3d6f5]">
      <div class="flex h-[24px] w-[630px] items-center rounded-r-[3px] bg-gradient-to-b from-[#e6f0fe] via-[#cfdff8] to-[#9fbbe8] pl-[5px] shadow-[0_1px_0_#6f8cc4]">
        <div class="flex h-[15px] w-[3px] shrink-0 flex-col justify-between"><i class="h-[2px] bg-[#3e5a92]"></i><i class="h-[2px] bg-[#3e5a92]"></i><i class="h-[2px] bg-[#3e5a92]"></i><i class="h-[2px] bg-[#3e5a92]"></i></div>
        <span class="ml-[4px] w-[41px] shrink-0 whitespace-nowrap text-[11.500px] leading-none">绘图<span class="text-[9.500px]">(<u>D</u>)</span></span>
        <svg class="ml-[2.500px] h-[4px] w-[7px] shrink-0"><use href="#down"/></svg>
        <svg class="ml-[5.500px] h-[16px] w-[16px] shrink-0"><use href="#cursor"/></svg>
        <div class="ml-[7px] h-[18px] w-[1px] shrink-0 bg-[#7f98c8]"></div>
        <span class="ml-[6px] w-[62px] shrink-0 whitespace-nowrap text-[11.500px] leading-none">自选图形<span class="text-[9px]">(<u>U</u>)</span></span>
        <svg class="ml-[3.500px] h-[4px] w-[7px] shrink-0"><use href="#down"/></svg>
        <svg class="ml-[6.500px] h-[16px] w-[16px] shrink-0"><use href="#line"/></svg>
        <svg class="ml-[7px] h-[16px] w-[16px] shrink-0"><use href="#arrow"/></svg>
        <svg class="ml-[6px] h-[16px] w-[16px] shrink-0"><use href="#rect"/></svg>
        <svg class="ml-[7px] h-[16px] w-[16px] shrink-0"><use href="#oval"/></svg>
        <svg class="ml-[6px] h-[16px] w-[16px] shrink-0"><use href="#txt"/></svg>
        <svg class="ml-[6px] h-[16px] w-[16px] shrink-0"><use href="#vtxt"/></svg>
        <svg class="ml-[7px] h-[16px] w-[16px] shrink-0"><use href="#wa"/></svg>
        <svg class="ml-[6px] h-[16px] w-[16px] shrink-0"><use href="#dg"/></svg>
        <svg class="ml-[7px] h-[16px] w-[16px] shrink-0"><use href="#clip"/></svg>
        <svg class="ml-[7px] h-[16px] w-[16px] shrink-0"><use href="#pic"/></svg>
        <div class="ml-[5px] h-[18px] w-[1px] shrink-0 bg-[#7f98c8]"></div>
        <div class="ml-[4px] flex h-[18px] w-[18px] shrink-0 flex-col items-center"><svg class="h-[13px] w-[14px]" viewBox="0 0 16 16"><path d="M3 7l6-6 5 6-5 6z" fill="#fff" stroke="#27407a" stroke-width="1.500"/></svg><div class="mt-auto h-[5px] w-[17px] bg-[#ecec30]"></div></div>
        <svg class="ml-[3.500px] h-[4px] w-[7px] shrink-0"><use href="#down"/></svg>
        <div class="ml-[5px] flex h-[18px] w-[17px] shrink-0 flex-col items-center"><svg class="h-[12px] w-[15px]" viewBox="0 0 16 16"><path d="M2 14L14 2" stroke="#27407a" stroke-width="2.500"/></svg><div class="mt-auto h-[5px] w-[17px] bg-[#1c3fb0]"></div></div>
        <svg class="ml-[5px] h-[4px] w-[7px] shrink-0"><use href="#down"/></svg>
        <div class="ml-[6px] flex h-[18px] w-[17px] shrink-0 flex-col items-center leading-none"><span class="text-[14px] font-bold text-[#27407a] [font-family:'Liberation_Serif',serif]">A</span><div class="mt-auto h-[4px] w-[16px] bg-[#d42a2a]"></div></div>
        <svg class="ml-[3px] h-[4px] w-[7px] shrink-0"><use href="#down"/></svg>
        <svg class="ml-[5.500px] h-[16px] w-[16px] shrink-0"><use href="#ls"/></svg>
        <svg class="ml-[7px] h-[16px] w-[16px] shrink-0"><use href="#dash"/></svg>
        <svg class="ml-[6px] h-[16px] w-[16px] shrink-0"><use href="#arrs"/></svg>
        <svg class="ml-[6px] h-[16px] w-[16px] shrink-0"><use href="#sh"/></svg>
        <svg class="ml-[7px] h-[16px] w-[16px] shrink-0"><use href="#d3"/></svg>
        <div class="ml-auto h-full w-[11px] shrink-0 rounded-r-[3px] bg-gradient-to-b from-[#6d93dc] to-[#234a9e]"><svg class="h-[24px] w-[11px]"><use href="#end"/></svg></div>
      </div>
    </div>

    <!-- barra de estado -->
    <div class="flex h-[20px] shrink-0 items-center bg-[#ece7d5] text-[12px] leading-none text-[#222] [&>div]:h-[17px] [&>div]:border-l [&>div]:border-[#cfc9b4]">
      <div class="ml-[5px] flex w-[197px] items-center pl-[42px]"><span class="w-[61px]">1 页</span><span class="w-[49px]">1 节</span><span>1/1</span></div>
      <div class="flex w-[220px] items-center pl-[3px]"><span class="w-[145px]">位置 2.5厘米</span><span class="w-[42px]">1 行</span><span>4 列</span></div>
      <div class="flex w-[38px] items-center justify-center text-[#b4b0a0]">录制</div>
      <div class="flex w-[33px] items-center justify-center text-[#b4b0a0]">修订</div>
      <div class="flex w-[32px] items-center justify-center text-[#b4b0a0]">扩展</div>
      <div class="flex w-[33px] items-center justify-center text-[#b4b0a0]">改写</div>
      <div class="flex w-[69px] items-center justify-center whitespace-nowrap">中文(中国)</div>
      <div class="flex w-[46px] items-center justify-center"><svg class="h-[14px] w-[16px]"><use href="#book"/></svg></div>
      <div class="w-[44px]"></div>
      <div class="w-[32px]"></div>
      <div class="w-[40px]"></div>
    </div>

    <!-- barra de tareas -->
    <div class="flex h-[30px] shrink-0 items-center bg-gradient-to-b from-[#3c81f0] via-[#245edb] to-[#1f4fc0] text-white">
      <div class="flex h-full w-[95px] shrink-0 items-center rounded-r-[10px] bg-gradient-to-b from-[#5fa85e] via-[#3c8f3e] to-[#2c6f30] pl-[10px] shadow-[inset_-2px_0_3px_#1b4d20]">
        <svg class="h-[19px] w-[20px] shrink-0" viewBox="0 0 20 19"><path d="M2 3q4-2 7 0v6q-3-2-7 0z" fill="#e2603a"/><path d="M10 3q4 2 8 0v6q-4 2-8 0z" fill="#72b84c"/><path d="M2 10q4-2 7 0v6q-3-2-7 0z" fill="#4f86d8"/><path d="M10 10q4 2 8 0v6q-4 2-8 0z" fill="#f2c23c"/></svg>
        <span class="ml-[6px] text-[20px] italic leading-none [font-family:'Noto_Sans_CJK_SC',sans-serif] [text-shadow:1px_1px_1px_#1b4d20]">开始</span>
      </div>
      <div class="ml-[3px] flex h-[26px] w-[40px] shrink-0 items-center justify-center border border-[#4d80e4]"><svg class="h-[18px] w-[18px]" viewBox="0 0 18 18"><circle cx="6" cy="5" r="4" fill="#e8b84e"/><circle cx="13" cy="6" r="4" fill="#72b84c"/><circle cx="5" cy="13" r="4" fill="#4f86d8"/><circle cx="12" cy="13" r="4" fill="#d9552a"/></svg></div>
      <svg class="ml-[4px] h-[18px] w-[18px] shrink-0" viewBox="0 0 18 18"><circle cx="9" cy="9" r="8" fill="#e4c334" stroke="#7d7420"/><path d="M9 4v10M4 9h10" stroke="#1c2a20" stroke-width="2.500"/></svg>
      <svg class="ml-[6px] h-[17px] w-[17px] shrink-0" viewBox="0 0 17 17"><path d="M1 1h8v8H1z" fill="#e2603a"/><path d="M9 1h7v8H9z" fill="#f2c23c"/><path d="M1 9h8v7H1z" fill="#72b84c"/><path d="M9 9h7v7H9z" fill="#d4408a"/></svg>
      <svg class="ml-[6px] h-[18px] w-[18px] shrink-0" viewBox="0 0 18 18"><circle cx="9" cy="9" r="8" fill="#72b84c"/><path d="M1 9a8 8 0 0 1 16 0z" fill="#d9552a"/><path d="M5 9a4 4 0 0 0 8 0z" fill="#f2c23c"/></svg>
      <span class="mb-[10px] ml-[7px] w-[18px] shrink-0 text-[11px] leading-none text-[#cfe0fb]">»</span>
      <div class="flex h-[25px] w-[139px] shrink-0 items-center gap-[4px] rounded-[2px] bg-[#3c76e8] pl-[11px] text-[10.500px]"><svg class="h-[12px] w-[12px] shrink-0" viewBox="0 0 12 12"><path d="M4 1h7L8 11H1z" fill="#bfe4f8"/></svg><span class="whitespace-nowrap">Word中下划线...</span></div>
      <div class="ml-[2px] flex h-[25px] w-[137px] shrink-0 items-center gap-[4px] rounded-[2px] bg-[#3c76e8] pl-[10px] text-[11px]"><svg class="h-[16px] w-[16px] shrink-0" viewBox="0 0 16 16"><path d="M0 0h16v16H0z" fill="#c9d4e6"/><path d="M0 11l5-6 6 6 5-3v8H0z" fill="#8a3f4a"/></svg><span class="whitespace-nowrap">我的宝贝</span></div>
      <div class="ml-[3px] flex h-[25px] w-[140px] shrink-0 items-center gap-[4px] rounded-[2px] bg-[#1c47a8] pl-[10px] text-[10.500px] shadow-[inset_1px_1px_2px_#0f2c70]"><div class="flex h-[15px] w-[14px] shrink-0 items-center justify-center border border-[#54607c] bg-[#e8eef8] text-[10px] font-bold leading-none text-[#27407a]">W</div><span class="whitespace-nowrap">文档 1 - Micr...</span></div>
      <div class="ml-[2px] flex h-[25px] w-[138px] shrink-0 items-center gap-[5px] rounded-[2px] bg-[#3c76e8] pl-[10px] text-[11px]"><svg class="h-[16px] w-[14px] shrink-0" viewBox="0 0 14 16"><path d="M1 1h9l3 3v11H1z" fill="#a8cdf0" stroke="#5a8cc8"/></svg><span class="whitespace-nowrap">新建 文本文档...</span></div>
      <div class="ml-[9px] h-[10px] w-[15px] shrink-0 rounded-[2px] border border-[#333] bg-[#e8e8e8]"></div>
      <div class="ml-[20px] flex h-full flex-1 items-center bg-gradient-to-b from-[#2aa0f0] to-[#1280dc] pl-[9px] shadow-[inset_1px_0_1px_#0f3a90]">
        <svg class="h-[15px] w-[15px] shrink-0" viewBox="0 0 15 15"><circle cx="7.500" cy="6" r="5" fill="#d9552a"/><path d="M2 14h11v-4H2z" fill="#e8eef8"/></svg>
        <svg class="ml-[5px] h-[15px] w-[15px] shrink-0" viewBox="0 0 15 15"><circle cx="7.500" cy="6" r="5" fill="#d9552a"/><path d="M2 14h11v-4H2z" fill="#e8eef8"/></svg>
        <svg class="h-[15px] w-[15px] shrink-0" viewBox="0 0 15 15"><path d="M2 2h11v8H2z" fill="#8fa4d8" stroke="#1c2a60"/><path d="M5 13h6" stroke="#1c2a60" stroke-width="2"/></svg>
        <svg class="ml-[2px] h-[15px] w-[15px] shrink-0" viewBox="0 0 15 15"><path d="M3 3q6-3 9 3-3 7-9 5" fill="none" stroke="#dfe8f6" stroke-width="2"/></svg>
        <svg class="ml-[2px] h-[16px] w-[15px] shrink-0" viewBox="0 0 15 16"><path d="M7.500 1L14 3v6q-2 5-6.500 6Q3 14 1 9V3z" fill="#e8f4e8" stroke="#3f7a3e"/><path d="M5 7h5l-3 4z" fill="#d6b32a"/></svg>
        <svg class="ml-[3px] h-[16px] w-[16px] shrink-0" viewBox="0 0 18 18"><circle cx="9" cy="9" r="8" fill="#e4c334" stroke="#3f7a3e"/><path d="M9 4v10M4 9h10" stroke="#1c2a20" stroke-width="2.500"/></svg>
        <span class="ml-[8px] whitespace-nowrap text-[10px] leading-none">20:11</span>
      </div>
    </div>

    <!-- marca de agua -->
    <div class="absolute left-[765px] top-[646px] flex h-[85px] w-[180px] items-center bg-[#1f2d52] pl-[15px]">
      <svg class="h-[36px] w-[36px] shrink-0" viewBox="0 0 36 36"><path d="M3 6q0-4 5-3l4 1q17 4 21 12 1 3-2 5Q22 31 13 34q-5 1-7-3-3-4-3-8z" fill="none" stroke="#bcc2cc" stroke-width="2.600"/><path d="M10 3v24q0 4 4 4" fill="none" stroke="#bcc2cc" stroke-width="2.600"/><path d="M15 13l7 5-7 5z" fill="#bcc2cc"/><path d="M24 13v10" stroke="#bcc2cc" stroke-width="2"/></svg>
      <div class="ml-[11px] flex w-[106px] flex-col text-[#c6cbd4]">
        <span class="whitespace-nowrap text-[25.500px] font-bold leading-[30px] tracking-[1px] [font-family:'Noto_Sans_CJK_SC',sans-serif]">溜溜自学</span>
        <span class="mt-[2px] whitespace-nowrap text-[11.500px] leading-none tracking-[0.8px] text-[#a7adba] [font-family:'Liberation_Sans',sans-serif]">ZIXUE.3066.COM</span>
      </div>
    </div>
  </div>

  <script>
    // reglas
    const ruleH = document.getElementById("rule-h");
    [8, 6, 4, 2, "", 2, 4, 6, 8, 10, 12, 14, 16, 18, 20, 22, 24, 26, 28, 30, 32, 34, 36, 38, 40, 42, 44, 46, 48].forEach(n => {
      const cell = document.createElement("div");
      cell.className = "flex w-[27.360px] shrink-0 flex-col items-center";
      const label = document.createElement("span");
      label.className = "h-[12px] text-[10px] leading-[12px] text-[#25304c]";
      label.textContent = n;
      const tick = document.createElement("i");
      tick.className = "mt-[1px] h-[3px] w-[1px] bg-[#555]";
      cell.appendChild(label);
      if (n !== "") cell.appendChild(tick);
      ruleH.appendChild(cell);
    });

    const ruleV = document.getElementById("rule-v");
    for (let i = 0; i < 26; i++) {
      const tick = document.createElement("i");
      tick.className = "absolute left-[3px] h-[1.500px] w-[6px] bg-[#333]";
      tick.style.top = (9 + i * 20.35) + "px";
      ruleV.appendChild(tick);
    }
    for (let n = 2; n <= 24; n += 2) {
      const label = document.createElement("span");
      label.className = "absolute left-0 w-[13px] -rotate-90 bg-white text-center text-[10px] leading-[10px] text-[#25304c]";
      label.style.top = (55 + (n - 2) * 20.35) + "px";
      label.textContent = n;
      ruleV.appendChild(label);
    }
  </script>
</body>
</html>
